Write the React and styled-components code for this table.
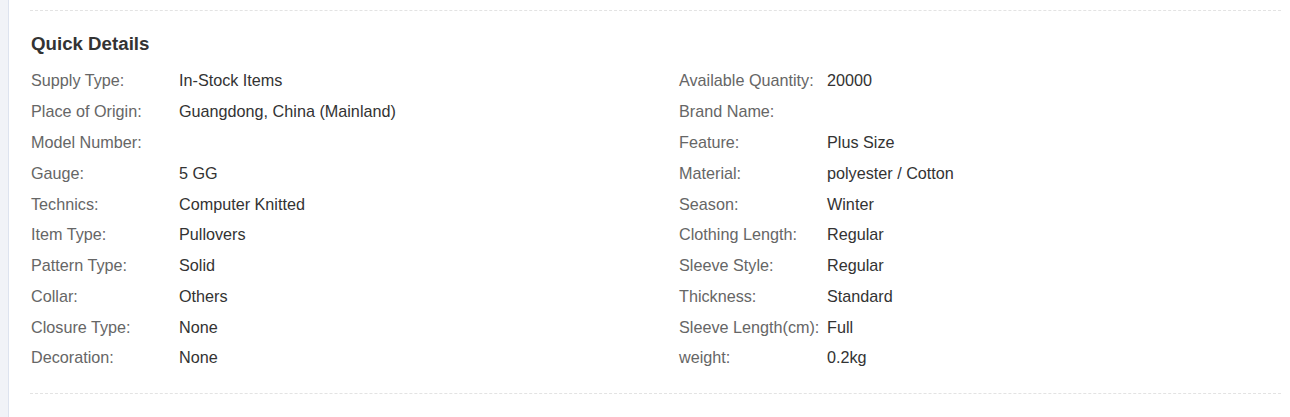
import React from "react";
import styled, { createGlobalStyle } from "styled-components";

const left = [
  ["Supply Type:", "In-Stock Items"],
  ["Place of Origin:", "Guangdong, China (Mainland)"],
  ["Model Number:", ""],
  ["Gauge:", "5 GG"],
  ["Technics:", "Computer Knitted"],
  ["Item Type:", "Pullovers"],
  ["Pattern Type:", "Solid"],
  ["Collar:", "Others"],
  ["Closure Type:", "None"],
  ["Decoration:", "None"],
];

const right = [
  ["Available Quantity:", "20000"],
  ["Brand Name:", ""],
  ["Feature:", "Plus Size"],
  ["Material:", "polyester / Cotton"],
  ["Season:", "Winter"],
  ["Clothing Length:", "Regular"],
  ["Sleeve Style:", "Regular"],
  ["Thickness:", "Standard"],
  ["Sleeve Length(cm):", "Full"],
  ["weight:", "0.2kg"],
];

function App() {
  return (
    <>
      <GlobalStyle />
      <Page>
        <SideStrip />
        <Main>
          <Section>
            <Title>Quick Details</Title>
            <Grid>
              <Column>
                {left.map(([k, v]) => (
                  <Row key={k}>
                    <Label>{k}</Label>
                    <Value>{v}</Value>
                  </Row>
                ))}
              </Column>
              <Column>
                {right.map(([k, v]) => (
                  <Row key={k}>
                    <Label>{k}</Label>
                    <Value>{v}</Value>
                  </Row>
                ))}
              </Column>
            </Grid>
          </Section>
        </Main>
      </Page>
    </>
  );
}

export default App;

const GlobalStyle = createGlobalStyle`
  body {
    margin: 0;
    background: #fff;
    font-family: "Liberation Sans", Arial, sans-serif;
  }
`;

const Page = styled.div`
  display: flex;
  height: 417px;
  overflow: hidden;
`;

const SideStrip = styled.div`
  width: 8px;
  flex-shrink: 0;
  background: #f1f3f7;
  border-right: 1px solid #dde3ee;
`;

const Main = styled.div`
  flex: 1;
  padding: 10px 9px 0 21px;
`;

const Section = styled.div`
  border-top: 1px dashed #e3e3e3;
  border-bottom: 1px dashed #e3e3e3;
  padding: 21px 0 19.6px;
`;

const Title = styled.div`
  font-size: 18.7px;
  font-weight: 700;
  color: #333;
  line-height: 24px;
  margin-bottom: 9.6px;
  padding-left: 1px;
`;

const Grid = styled.div`
  display: grid;
  grid-template-columns: 648px 1fr;
`;

const Column = styled.div`
  display: flex;
  flex-direction: column;
`;

const Row = styled.div`
  display: flex;
  height: 30.78px;
  align-items: center;
  font-size: 16.2px;
  padding-left: 1px;
`;

const Label = styled.div`
  width: 148px;
  flex-shrink: 0;
  color: #666;
`;

const Value = styled.div`
  color: #333;
`;
